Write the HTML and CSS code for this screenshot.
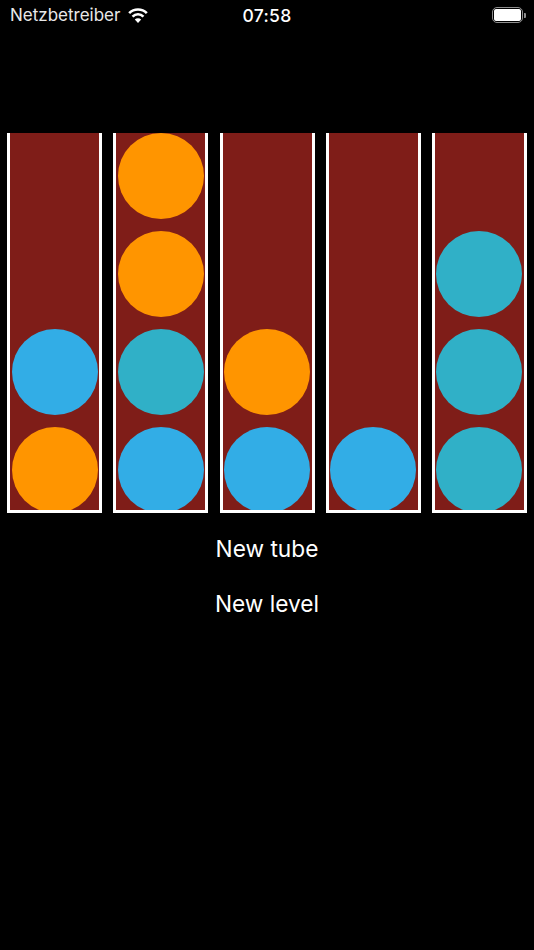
FILE: index.html
```html
<!DOCTYPE html>
<html lang="en">
<head>
  <meta charset="UTF-8" />
  <meta name="viewport" content="width=device-width, initial-scale=1.0" />
  <title>Ball Sort</title>
  <link rel="stylesheet" href="styles.css">
</head>
<body>
  <div class="status-bar">
    <div class="status-left">
      <span class="carrier">Netzbetreiber</span>
      <svg class="wifi" viewBox="0 0 20 15" width="20" height="15" fill="none">
        <path d="M1.160 5.160A12.500 12.500 0 0 1 18.840 5.160" stroke="#fff" stroke-width="2.600"/>
        <path d="M4.550 8.550A7.700 7.700 0 0 1 15.450 8.550" stroke="#fff" stroke-width="2.600"/>
        <path d="M10 15L6.800 11.600A4.600 4.600 0 0 1 13.200 11.600z" fill="#fff"/>
      </svg>
    </div>
    <span class="clock">07:58</span>
    <div class="battery">
      <div class="battery-body"><div class="battery-level"></div></div>
      <div class="battery-cap"></div>
    </div>
  </div>

  <div class="board">
    <div class="tube">
      <div class="ball blue"></div>
      <div class="ball orange"></div>
    </div>
    <div class="tube">
      <div class="ball orange"></div>
      <div class="ball orange"></div>
      <div class="ball teal"></div>
      <div class="ball blue"></div>
    </div>
    <div class="tube">
      <div class="ball orange"></div>
      <div class="ball blue"></div>
    </div>
    <div class="tube">
      <div class="ball blue"></div>
    </div>
    <div class="tube">
      <div class="ball teal"></div>
      <div class="ball teal"></div>
      <div class="ball teal"></div>
    </div>
  </div>

  <div class="actions">
    <button type="button">New tube</button>
    <button type="button">New level</button>
  </div>
</body>
</html>
```

FILE: styles.css
```css
body {
  margin: 0;
  height: 950px;
  background: #000;
  color: #fff;
  font-family: Inter, 'Liberation Sans', sans-serif;
  overflow: hidden;
}
.status-bar {
  height: 30px;
  display: grid;
  grid-template-columns: 1fr auto 1fr;
  align-items: center;
  padding: 0 8px 0 10px;
}
.status-left {
  display: flex;
  align-items: center;
  gap: 8px;
}
.carrier {
  font-size: 17px;
  color: #e8e8e8;
}
.clock {
  font-size: 17.500px;
  font-weight: 500;
  letter-spacing: 0.3px;
  margin-left: -2px;
}
.battery {
  justify-self: end;
  display: flex;
  align-items: center;
  gap: 1px;
}
.battery-body {
  width: 31px;
  height: 16px;
  box-sizing: border-box;
  border: 1.500px solid #8e8e8e;
  border-radius: 5px;
  padding: 1px;
}
.battery-level {
  height: 100%;
  background: #fff;
  border-radius: 2px;
}
.battery-cap {
  width: 2px;
  height: 5px;
  background: #8e8e8e;
  border-radius: 0 1px 1px 0;
}
.board {
  display: flex;
  justify-content: space-between;
  padding: 103px 7.450px 0;
}
.tube {
  width: 95px;
  height: 380px;
  box-sizing: border-box;
  background: #7f1d18;
  border: 3px solid #fff;
  border-top: none;
  overflow: hidden;
  display: flex;
  flex-direction: column;
  align-items: center;
  justify-content: flex-end;
  gap: 12px;
}
.ball {
  width: 86px;
  height: 86px;
  border-radius: 50%;
  flex-shrink: 0;
  position: relative;
  top: 3px;
}
.orange {
  background: #ff9500;
}
.blue {
  background: #32ade6;
}
.teal {
  background: #30b0c7;
}
.actions {
  display: flex;
  flex-direction: column;
  align-items: center;
  gap: 21px;
  padding-top: 18.500px;
}
button {
  background: none;
  border: none;
  padding: 0;
  color: #fff;
  font-family: inherit;
  font-size: 22.700px;
  line-height: 34px;
}
```
